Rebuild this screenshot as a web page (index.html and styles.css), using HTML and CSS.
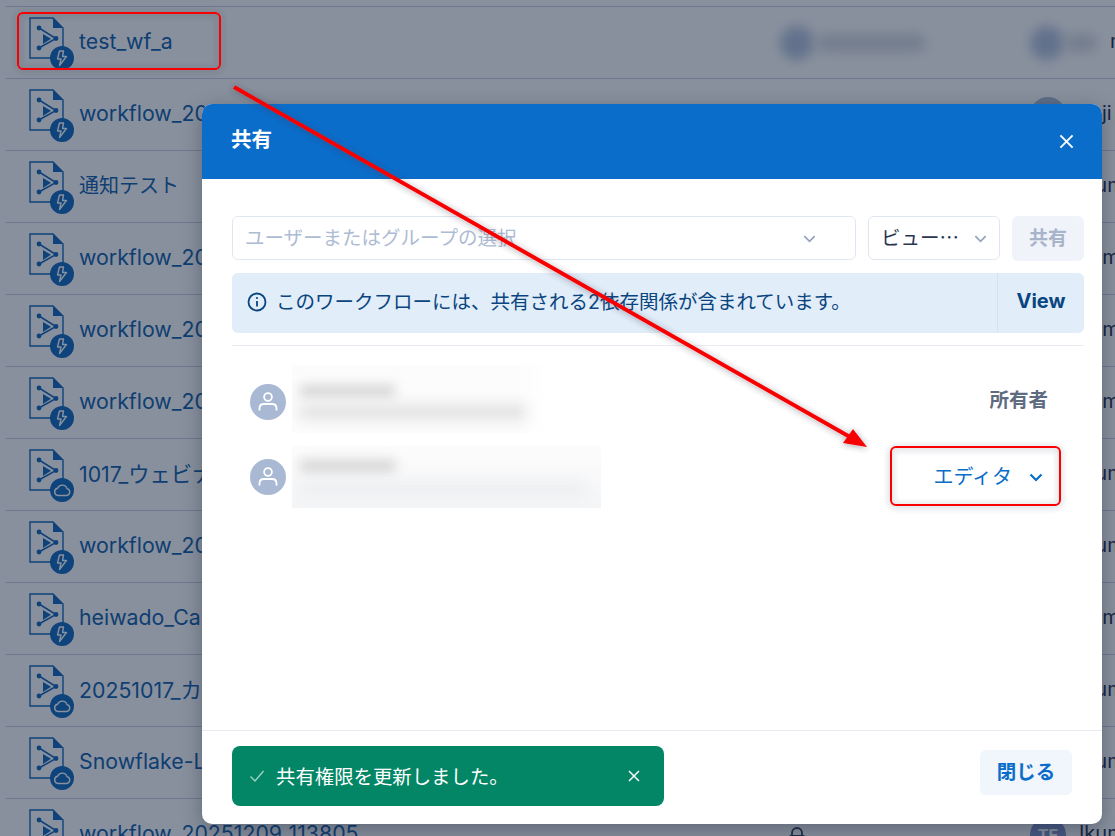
FILE: index.html
```html
<!DOCTYPE html>
<html lang="ja">
<head>
<meta charset="utf-8">
<title>共有</title>
<link rel="stylesheet" href="styles.css">
</head>
<body>
<svg class="defs" width="0" height="0" aria-hidden="true">
  <defs>
    <symbol id="wf" viewBox="0 0 46 56">
      <path d="M1 1H24L34 11V41H1Z" fill="none" stroke="currentColor" stroke-width="1.4"/>
      <path d="M24 1V11H34Z" fill="currentColor"/>
      <path d="M10 11L27 21.500L10 31" fill="none" stroke="currentColor" stroke-width="1.500"/>
      <path d="M14 17V27L22 21.800Z" fill="currentColor"/>
      <circle cx="10" cy="11" r="2.400" fill="currentColor"/>
      <circle cx="10" cy="31" r="2.400" fill="currentColor"/>
      <circle cx="27" cy="21.500" r="2.400" fill="currentColor"/>
    </symbol>
    <symbol id="bolt" viewBox="0 0 24 24">
      <path d="M13.500 5H9.500L7.500 13H11L9.500 19.500L16.500 10.500H12.500Z" fill="none" stroke="currentColor" stroke-width="1.400" stroke-linejoin="round"/>
    </symbol>
    <symbol id="cloud" viewBox="0 0 24 24">
      <path d="M8 17.500H16.500A3.500 3.500 0 0 0 17 10.600A5 5 0 0 0 7.600 10.200A3.700 3.700 0 0 0 8 17.500Z" fill="none" stroke="currentColor" stroke-width="1.400"/>
    </symbol>
    <symbol id="person" viewBox="0 0 36 36">
      <circle cx="18" cy="13" r="3.900" fill="none" stroke="currentColor" stroke-width="1.800"/>
      <path d="M9.500 26.500V24.500C9.500 21.500 11.500 20 14 20H22C24.500 20 26.500 21.500 26.500 24.500V26.500" fill="none" stroke="currentColor" stroke-width="1.800"/>
    </symbol>
    <symbol id="chev" viewBox="0 0 16 16">
      <path d="M2.500 5.500L8 11L13.500 5.500" fill="none" stroke="currentColor"/>
    </symbol>
  </defs>
</svg>

<main class="list">
  <div class="row"><div class="file"><svg class="wf"><use href="#wf"/></svg><span class="badge"><svg><use href="#bolt"/></svg></span></div><span class="name latin">test_wf_a</span><div class="col-a"><span class="smudge-dot"></span><span class="smudge-bar"></span></div><div class="col-b"><span class="smudge-dot"></span><span class="smudge-bar short"></span><span class="owner">m</span></div></div>
  <div class="row"><div class="file"><svg class="wf"><use href="#wf"/></svg><span class="badge"><svg><use href="#bolt"/></svg></span></div><span class="name latin">workflow_20251209_113805</span><div class="col-a"></div><div class="col-b"><span class="avatar"></span><span class="owner">Fuji</span></div></div>
  <div class="row"><div class="file"><svg class="wf"><use href="#wf"/></svg><span class="badge"><svg><use href="#bolt"/></svg></span></div><span class="name">通知テスト</span><div class="col-a"></div><div class="col-b"><span class="avatar"></span><span class="owner">Ikumi</span></div></div>
  <div class="row"><div class="file"><svg class="wf"><use href="#wf"/></svg><span class="badge"><svg><use href="#bolt"/></svg></span></div><span class="name latin">workflow_20251209_113805</span><div class="col-a"></div><div class="col-b"><span class="avatar"></span><span class="owner">Tomo</span></div></div>
  <div class="row"><div class="file"><svg class="wf"><use href="#wf"/></svg><span class="badge"><svg><use href="#bolt"/></svg></span></div><span class="name latin">workflow_20251209_113805</span><div class="col-a"></div><div class="col-b"><span class="avatar"></span><span class="owner">Tomo</span></div></div>
  <div class="row"><div class="file"><svg class="wf"><use href="#wf"/></svg><span class="badge"><svg><use href="#bolt"/></svg></span></div><span class="name latin">workflow_20251209_113805</span><div class="col-a"></div><div class="col-b"><span class="avatar"></span><span class="owner">Tomo</span></div></div>
  <div class="row"><div class="file"><svg class="wf"><use href="#wf"/></svg><span class="badge"><svg><use href="#cloud"/></svg></span></div><span class="name latin">1017_ウェビナー</span><div class="col-a"></div><div class="col-b"><span class="avatar"></span><span class="owner">Ikumi</span></div></div>
  <div class="row"><div class="file"><svg class="wf"><use href="#wf"/></svg><span class="badge"><svg><use href="#bolt"/></svg></span></div><span class="name latin">workflow_20251209_113805</span><div class="col-a"></div><div class="col-b"><span class="avatar"></span><span class="owner">Ikumi</span></div></div>
  <div class="row"><div class="file"><svg class="wf"><use href="#wf"/></svg><span class="badge"><svg><use href="#bolt"/></svg></span></div><span class="name latin">heiwado_Campaign</span><div class="col-a"></div><div class="col-b"><span class="avatar"></span><span class="owner">Tomo</span></div></div>
  <div class="row"><div class="file"><svg class="wf"><use href="#wf"/></svg><span class="badge"><svg><use href="#cloud"/></svg></span></div><span class="name latin">20251017_カスタム</span><div class="col-a"></div><div class="col-b"><span class="avatar"></span><span class="owner">Ikumi</span></div></div>
  <div class="row"><div class="file"><svg class="wf"><use href="#wf"/></svg><span class="badge"><svg><use href="#cloud"/></svg></span></div><span class="name latin">Snowflake-Live</span><div class="col-a"></div><div class="col-b"><span class="avatar"></span><span class="owner">Ikumi</span></div></div>
  <div class="row"><div class="file"><svg class="wf"><use href="#wf"/></svg><span class="badge"><svg><use href="#bolt"/></svg></span></div><span class="name latin">workflow_20251209_113805</span><div class="col-a"><svg class="lock" viewBox="0 0 16 20"><path d="M3 9V6A5 5 0 0 1 13 6V9M1.500 9H14.500V19H1.500Z" fill="none" stroke="currentColor" stroke-width="1.800"/></svg></div><div class="col-b"><span class="avatar initials">TE</span><span class="owner">Ikumi</span></div></div>
</main>

<div class="scrim"></div>

<section class="modal" role="dialog" aria-label="共有">
  <header class="modal-head">
    <h2>共有</h2>
    <svg class="close" viewBox="0 0 16 16"><path d="M1.500 1.500L14.500 14.500M14.500 1.500L1.500 14.500" fill="none" stroke="currentColor" stroke-width="2"/></svg>
  </header>
  <div class="modal-body">
    <div class="share-bar">
      <div class="select select-user"><span class="placeholder">ユーザーまたはグループの選択</span><svg class="chev"><use href="#chev"/></svg></div>
      <div class="select select-role"><span class="lift">ビュー…</span><svg class="chev"><use href="#chev"/></svg></div>
      <button class="btn-share" type="button"><span class="lift">共有</span></button>
    </div>
    <div class="notice">
      <div class="notice-text">
        <svg class="info" viewBox="0 0 20 20"><circle cx="10" cy="10" r="8.500" fill="none" stroke="currentColor" stroke-width="1.800"/><path d="M10 9V14.500" stroke="currentColor" stroke-width="1.800"/><circle cx="10" cy="6" r="1.100" fill="currentColor"/></svg>
        <span class="lift">このワークフローには、共有される2依存関係が含まれています。</span>
      </div>
      <span class="notice-view"><span class="lift">View</span></span>
    </div>
    <div class="members">
      <div class="member member-a">
        <span class="m-avatar"><svg><use href="#person"/></svg></span>
        <div class="m-info"><span class="blur-name"></span><span class="blur-mail"></span></div>
        <span class="role-owner">所有者</span>
      </div>
      <div class="member member-b">
        <span class="m-avatar"><svg><use href="#person"/></svg></span>
        <div class="m-info m-info-wide"><span class="blur-name"></span><span class="blur-mail"></span></div>
        <div class="role-edit"><span class="lift">エディタ</span><svg class="chev"><use href="#chev"/></svg></div>
      </div>
    </div>
  </div>
  <footer class="modal-foot">
    <div class="toast">
      <svg class="check" viewBox="0 0 16 16"><path d="M1.500 8.500L6 13L14.500 3" fill="none" stroke="currentColor" stroke-width="1.400"/></svg>
      <span class="toast-text">共有権限を更新しました。</span>
      <svg class="toast-x" viewBox="0 0 12 12"><path d="M1 1L11 11M11 1L1 11" fill="none" stroke="currentColor" stroke-width="1.500"/></svg>
    </div>
    <button class="btn-close" type="button"><span class="lift">閉じる</span></button>
  </footer>
</section>

<svg class="markup" viewBox="0 0 1115 836" aria-hidden="true">
  <defs><filter id="sh" x="-10%" y="-10%" width="120%" height="120%"><feDropShadow dx="0" dy="1" stdDeviation="3" flood-color="#334" flood-opacity=".45"/></filter></defs>
  <g filter="url(#sh)">
    <rect x="18" y="13" width="202" height="56" rx="5" fill="none" stroke="#f80000" stroke-width="2"/>
    <rect x="891" y="447" width="169" height="58" rx="5" fill="none" stroke="#f80000" stroke-width="2"/>
    <path d="M234 87L850 437" fill="none" stroke="#f80000" stroke-width="4"/>
    <path d="M867 447L843 443L853 429Z" fill="#f80000"/>
  </g>
</svg>
</body>
</html>
```
FILE: styles.css
```css
* { box-sizing: border-box; }
html, body { margin: 0; height: 100%; }
body {
  position: relative;
  width: 1115px;
  height: 836px;
  overflow: hidden;
  background: #fff;
  font-family: Inter, "Noto Sans CJK JP", sans-serif;
}
.defs { position: absolute; }
.lift { position: relative; top: -2px; }

.list { padding: 6px 0 0 6px; }
.row {
  display: flex;
  align-items: center;
  height: 72px;
  width: 1200px;
  border-top: 1px solid #c7d0dd;
  color: #0b5aa8;
}
.file { position: relative; width: 46px; height: 56px; margin: 4px 0 0 23px; flex: none; }
.wf { display: block; width: 46px; height: 56px; color: #0c63b8; }
.badge {
  position: absolute;
  left: 21px;
  top: 29px;
  width: 24px;
  height: 24px;
  border-radius: 50%;
  background: #0a64bd;
  color: #fff;
}
.badge svg { display: block; width: 24px; height: 24px; }
.name { width: 690px; margin: 0 0 4px 4px; font-size: 20px; white-space: nowrap; flex: none; overflow: hidden; }
.name.latin { font-size: 21.300px; }
.col-a { width: 261px; flex: none; display: flex; align-items: center; gap: 2px; padding-left: 11px; }
.col-b { flex: none; display: flex; align-items: center; gap: 13px; color: #1b2a4a; font-size: 20px; }
.lock { width: 16px; height: 20px; color: #2d3a55; margin: 4px 0 0 9px; }
.owner { margin-bottom: 3px; }
.smudge-dot { display: block; width: 34px; height: 34px; border-radius: 50%; background: #b4c1dc; filter: blur(6px); flex: none; }
.smudge-bar { display: block; width: 110px; height: 18px; border-radius: 9px; background: #d6d9df; filter: blur(6px); flex: none; }
.smudge-bar.short { width: 33px; margin-left: -13px; }
.avatar {
  width: 36px;
  height: 36px;
  border-radius: 50%;
  background: #aab9d3;
  color: #fff;
  font-size: 16px;
  font-weight: 700;
  display: flex;
  align-items: center;
  justify-content: center;
  flex: none;
}
.initials { background: #7d8fc7; }

.scrim { position: absolute; inset: 0; background: rgba(17, 34, 60, .5); }

.modal {
  position: absolute;
  left: 202px;
  top: 104px;
  width: 900px;
  height: 720px;
  background: #fff;
  border-radius: 10px;
  display: flex;
  flex-direction: column;
  overflow: hidden;
  box-shadow: 0 6px 20px rgba(20, 30, 50, .35);
}
.modal-head {
  flex: none;
  height: 75px;
  padding: 0 29px;
  display: flex;
  align-items: center;
  justify-content: space-between;
  background: #0b6dca;
  color: #fff;
}
.modal-head h2 { margin: 0 0 3px; font-size: 20.500px; font-weight: 700; line-height: 1; }
.close { width: 15px; height: 15px; margin-right: -1px; }

.modal-body { flex: 1; padding: 37px 18px 0 30px; }
.share-bar { display: flex; gap: 12px; height: 45px; }
.select {
  height: 44px;
  background: #fff;
  border: 1px solid #dfe5f1;
  border-radius: 6px;
  display: flex;
  align-items: center;
  justify-content: space-between;
}
.select-user { width: 624px; padding: 0 38px 0 12px; font-size: 19.500px; }
.placeholder { color: #aebcd3; position: relative; top: -2px; }
.select-role { width: 132px; padding: 0 11px 0 12px; font-size: 19.500px; color: #2a3550; font-family: "Noto Sans CJK JP", sans-serif; }
.chev { width: 15px; height: 15px; color: #94a3bd; display: block; flex: none; stroke-width: 1.800; }
.btn-share {
  width: 72px;
  height: 45px;
  border: 0;
  border-radius: 6px;
  background: #f0f3f9;
  color: #a7b4c9;
  font: 700 19px Inter, "Noto Sans CJK JP", sans-serif;
}
.notice {
  margin-top: 12px;
  height: 60px;
  border-radius: 6px;
  background: #e1edf9;
  display: flex;
  align-items: center;
  color: #0a4580;
}
.notice-text { flex: 1; display: flex; align-items: center; gap: 9px; padding: 0 0 2px 15px; font-size: 19.500px; white-space: nowrap; height: 100%; overflow: hidden; }
.info { width: 20px; height: 20px; flex: none; }
.notice-view {
  width: 87px;
  height: 100%;
  border-left: 1px solid #d5e2f1;
  display: flex;
  align-items: center;
  justify-content: center;
  font-size: 20px;
  font-weight: 700;
  flex: none;
}
.members { margin-top: 12px; border-top: 1px solid #e8ebf1; padding: 19px 0 0 18px; }
.member { display: flex; align-items: center; }
.member-a { height: 68px; }
.member-a .m-avatar { margin-top: 6px; }
.member-b { height: 62px; margin-top: 13px; }
.m-avatar { width: 36px; height: 36px; border-radius: 50%; background: #a9b9d4; color: #fff; flex: none; }
.m-avatar svg { display: block; width: 36px; height: 36px; }
.m-info { margin-left: 6px; width: 255px; height: 100%; background: #fcfcfc; padding: 20px 8px 0; display: flex; flex-direction: column; gap: 8px; flex: none; overflow: hidden; mask-image: linear-gradient(to right, #000 88%, transparent); }
.m-info-wide { width: 309px; background: linear-gradient(#fcfcfc, #f4f5f7); padding-top: 14px; gap: 12px; mask-image: none; }
.blur-name { display: block; width: 95px; height: 12px; background: #d4d4d4; filter: blur(6px); flex: none; }
.blur-mail { display: block; width: 230px; height: 14px; background: #e0e0e0; filter: blur(7px); flex: none; }
.m-info-wide .blur-mail { width: 285px; height: 10px; background: #e9ebee; }
.role-owner { margin: 0 36px 2px auto; font-size: 19.500px; font-weight: 700; color: #5f6b80; }
.role-edit { margin-left: auto; margin-right: 40px; display: flex; align-items: center; gap: 16px; color: #0b6dca; font-size: 20px; }
.role-edit .chev { color: #0b6dca; width: 16px; height: 16px; stroke-width: 2.200; }

.modal-foot {
  flex: none;
  height: 94px;
  border-top: 1px solid #e8e9f3;
  padding: 15px 30px 0 30px;
  display: flex;
  align-items: flex-start;
  justify-content: space-between;
}
.toast {
  width: 432px;
  height: 60px;
  border-radius: 8px;
  background: #028665;
  color: #fff;
  display: flex;
  align-items: center;
  padding: 0 24px 0 17px;
}
.check { width: 16px; height: 16px; color: #9cd3c2; flex: none; }
.toast-text { flex: 1; margin: 0 0 2px 11px; font-size: 19.400px; white-space: nowrap; }
.toast-x { width: 12px; height: 12px; flex: none; }
.btn-close {
  margin-top: 4px;
  width: 92px;
  height: 45px;
  border: 0;
  border-radius: 6px;
  background: #f1f5fc;
  color: #0b6dca;
  font: 700 19.500px Inter, "Noto Sans CJK JP", sans-serif;
}

.markup { position: absolute; left: 0; top: 0; width: 1115px; height: 836px; pointer-events: none; }
```
